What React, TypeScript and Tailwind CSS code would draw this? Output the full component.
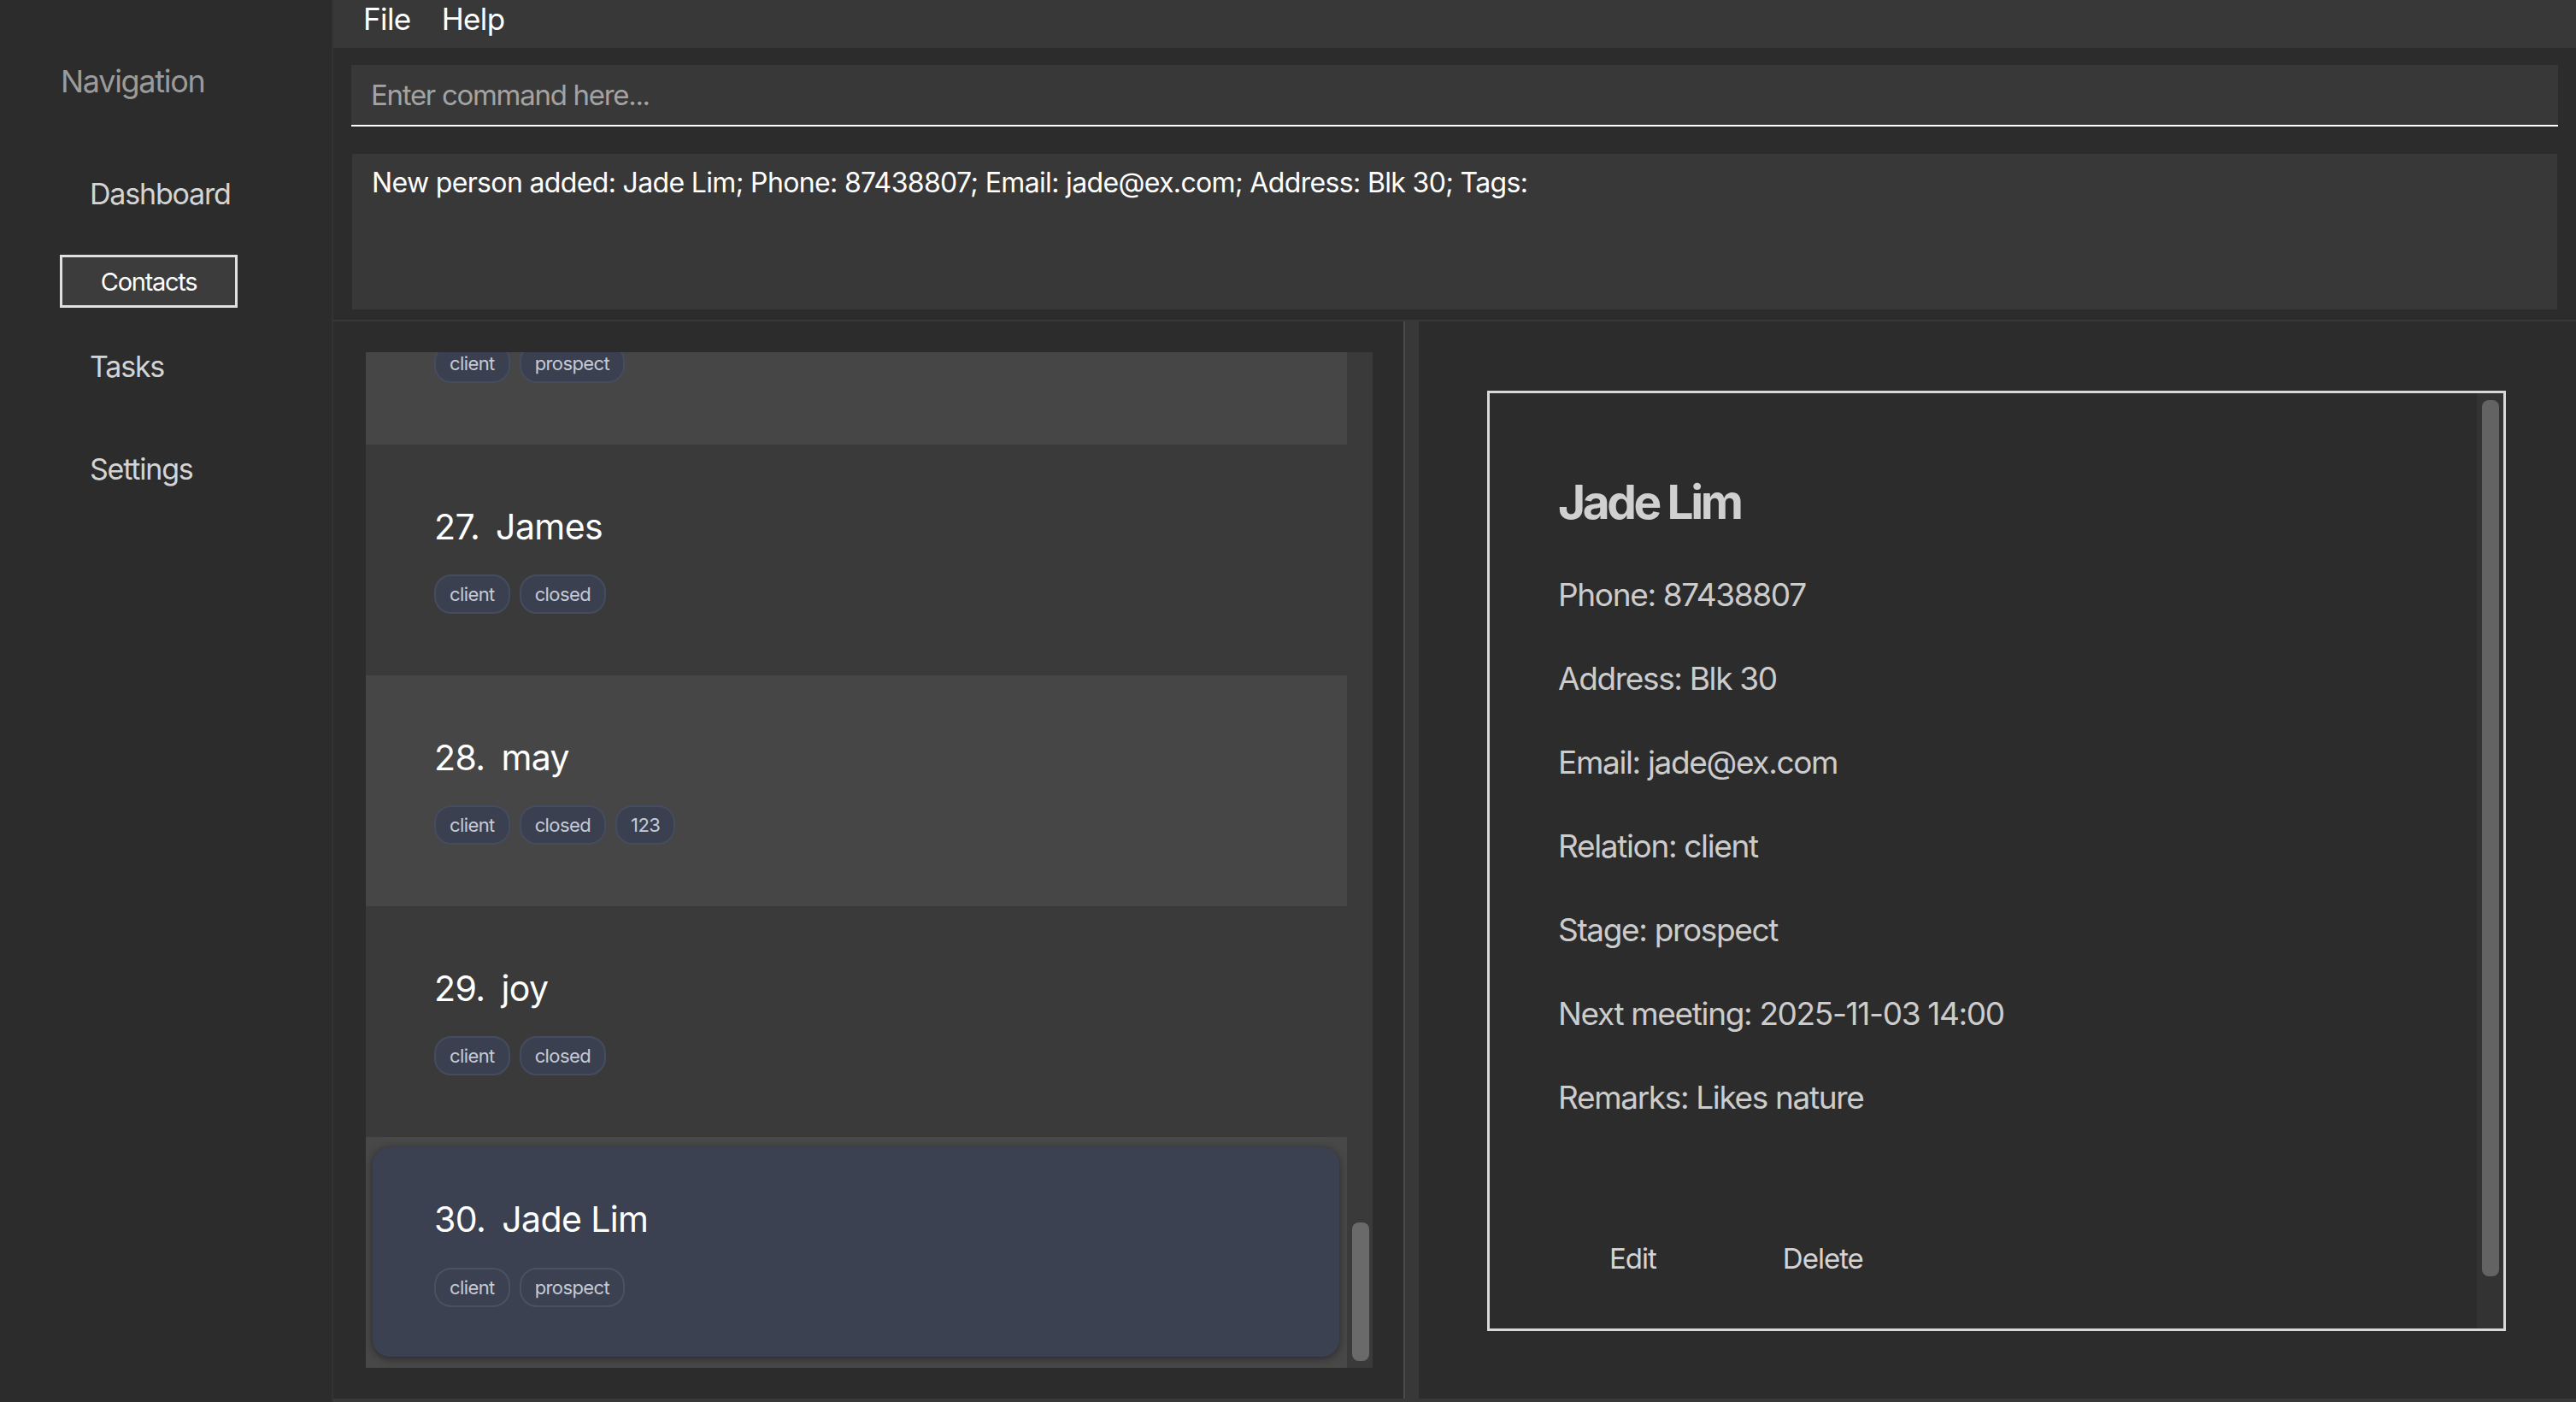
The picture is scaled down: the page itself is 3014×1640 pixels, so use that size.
import React from 'react';

type Person = { index: number; name: string; tags: string[] };

const people: Person[] = [
  { index: 26, name: 'Jenny', tags: ['client', 'prospect'] },
  { index: 27, name: 'James', tags: ['client', 'closed'] },
  { index: 28, name: 'may', tags: ['client', 'closed', '123'] },
  { index: 29, name: 'joy', tags: ['client', 'closed'] },
];

const details = [
  'Phone: 87438807',
  'Address: Blk 30',
  'Email: jade@ex.com',
  'Relation: client',
  'Stage: prospect',
  'Next meeting: 2025-11-03 14:00',
  'Remarks: Likes nature',
];

const Tag = ({ label, selected }: { label: string; selected?: boolean }) => (
  <span
    className={
      selected
        ? 'flex h-[46px] items-center rounded-[20px] border-2 border-[#4a5162] px-[16px] text-[22px] leading-none tracking-[-0.6px] text-[#c5cad5]'
        : 'flex h-[46px] items-center rounded-[20px] border-2 border-[#454c5d] bg-[#3a4050] px-[16px] text-[22px] leading-none tracking-[-0.6px] text-[#c5cad5]'
    }
  >
    {label}
  </span>
);

const Tags = ({ tags, selected }: { tags: string[]; selected?: boolean }) => (
  <div className="flex gap-[11px]">
    {tags.map((t) => (
      <Tag key={t} label={t} selected={selected} />
    ))}
  </div>
);

const Name = ({ person }: { person: Person }) => (
  <div className="flex text-[41px] leading-none tracking-[-0.6px] text-white">
    <span>{person.index}.</span>
    <span className="ml-[19px]">{person.name}</span>
  </div>
);

const PersonCard = ({ person, odd }: { person: Person; odd: boolean }) => (
  <div className={odd ? 'h-[270px] shrink-0 bg-[#3a3a3a] pl-[80px] pt-[76px]' : 'h-[270px] shrink-0 bg-[#464646] pl-[80px] pt-[76px]'}>
    <Name person={person} />
    <div className="mt-[35px]">
      <Tags tags={person.tags} />
    </div>
  </div>
);

const NavItem = ({ label, className }: { label: string; className: string }) => (
  <div className={`text-[34px] leading-none tracking-[-1.2px] text-[#d4d4d4] ${className}`}>{label}</div>
);

export default function App() {
  return (
    <div className="flex h-[1640px] w-[3014px] overflow-hidden bg-[#2c2c2c] font-['Inter','Noto_Sans',sans-serif]">
      {/* sidebar */}
      <aside className="flex w-[390px] shrink-0 flex-col border-r-2 border-[#333333]">
        <div className="mt-[77px] pl-[71px] text-[36px] leading-none tracking-[-1.3px] text-[#9b9b9b]">Navigation</div>
        <NavItem label="Dashboard" className="mt-[97px] pl-[105px]" />
        <button className="ml-[70px] mt-[54px] flex h-[62px] w-[208px] items-center justify-center border-[3px] border-[#e0e0e0] bg-[#3c3c3c] text-[29px] leading-none tracking-[-1.3px] text-white">
          Contacts
        </button>
        <NavItem label="Tasks" className="mt-[52px] pl-[105px]" />
        <NavItem label="Settings" className="mt-[86px] pl-[105px]" />
      </aside>

      {/* main */}
      <div className="flex min-w-0 flex-1 flex-col">
        <div className="flex h-[56px] shrink-0 gap-[36px] bg-[#383838] pl-[35px] pt-[5px] text-[35px] leading-[35px] tracking-[-0.6px] text-white">
          <span>File</span>
          <span>Help</span>
        </div>

        <div className="mx-[21px] mt-[20px] flex h-[72px] shrink-0 items-center border-b-2 border-white bg-[#383838] pl-[23px]">
          <span className="text-[33px] leading-none tracking-[-1.3px] text-[#a3a3a3]">Enter command here...</span>
        </div>

        <div className="mx-[22px] mt-[32px] h-[182px] shrink-0 bg-[#383838] pl-[23px] pt-[18px] text-[32px] leading-none tracking-[-0.65px] text-white">
          New person added: Jade Lim; Phone: 87438807; Email: jade@ex.com; Address: Blk 30; Tags:
        </div>

        <div className="mt-[12px] flex min-h-0 flex-1 border-y-2 border-b-4 border-[#383838]">
          {/* list */}
          <div className="flex w-[1252px] shrink-0 pb-[36px] pl-[38px] pr-[36px] pt-[36px]">
            <div className="flex min-w-0 flex-1 flex-col overflow-hidden">
              <div className="-mt-[162px] flex flex-col">
                {people.map((p, i) => (
                  <PersonCard key={p.index} person={p} odd={i % 2 === 1} />
                ))}
                <div className="h-[270px] shrink-0 bg-[#484848] pb-[13px] pl-[8px] pr-[9px] pt-[12px]">
                  <div className="h-full rounded-[20px] bg-[#3b4150] pl-[72px] pt-[64px] shadow-[0_2px_10px_rgba(0,0,0,0.45)]">
                    <Name person={{ index: 30, name: 'Jade Lim', tags: [] }} />
                    <div className="mt-[36px]">
                      <Tags tags={['client', 'prospect']} selected />
                    </div>
                  </div>
                </div>
              </div>
            </div>
            <div className="flex w-[30px] shrink-0 flex-col justify-end bg-[#3a3a3a] pb-[8px] pl-[6px]">
              <div className="h-[162px] w-[20px] rounded-[8px] bg-[#6a6a6a]" />
            </div>
          </div>

          {/* divider */}
          <div className="w-[18px] shrink-0 border-l-2 border-[#4a4a4a] bg-[#383838]" />

          {/* detail */}
          <div className="flex min-w-0 flex-1 pb-[79px] pl-[80px] pr-[82px] pt-[81px]">
            <div className="flex flex-1 border-[3px] border-[#d8d8d8]">
              <div className="flex flex-1 flex-col pl-[80px] pt-[100px]">
                <div className="text-[55px] font-bold leading-none tracking-[-3.4px] text-[#d0d0d0]">Jade Lim</div>
                <div className="mt-[62px] flex flex-col gap-[61px]">
                  {details.map((d) => (
                    <div key={d} className="text-[37px] leading-none tracking-[-1.35px] text-[#cccccc]">
                      {d}
                    </div>
                  ))}
                </div>
                <div className="mt-[154px] flex text-[33px] leading-none tracking-[-1px] text-[#d4d4d4]">
                  <button className="ml-[60px]">Edit</button>
                  <button className="ml-[148px]">Delete</button>
                </div>
              </div>
              <div className="w-[31px] shrink-0 bg-[#333333] pl-[6px] pt-[8px]">
                <div className="h-[1025px] w-[20px] rounded-[8px] bg-[#636363]" />
              </div>
            </div>
          </div>
        </div>
      </div>
    </div>
  );
}
